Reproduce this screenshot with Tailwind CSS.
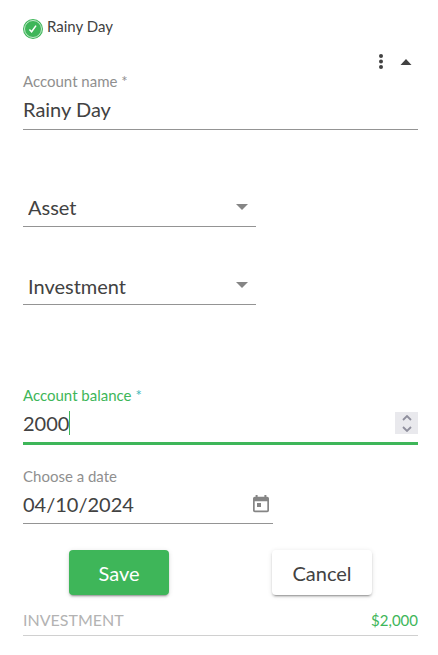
<!DOCTYPE html>
<html lang="en">

<head>
    <meta charset="UTF-8">
    <meta name="viewport" content="width=device-width, initial-scale=1.0">
    <title>Edit Account</title>
    <script src="https://cdn.jsdelivr.net/npm/@tailwindcss/browser@4"></script>
</head>

<body class="bg-white font-['Lato',sans-serif] text-[15px] text-[#424242]">

    <main class="pt-[13px] pl-[23px] pr-5 pb-5">
        <!-- Account header -->
        <header class="flex items-end gap-1">
            <svg class="size-5" viewBox="0 0 20 20" aria-hidden="true">
                <circle cx="10" cy="10" r="10" fill="#3eb659" />
                <circle cx="10" cy="10" r="8.5" fill="none" stroke="#c5e9cd" stroke-width="1" />
                <path d="M6.4 10.4l2.2 2.4 4.4-6.2" fill="none" stroke="#fff" stroke-width="1.5" />
            </svg>
            <h1 class="leading-[26px]">Rainy Day</h1>
        </header>

        <div class="mt-[11px] flex justify-end gap-px">
            <button type="button" aria-label="More options">
                <svg class="size-6" viewBox="0 0 24 24" fill="currentColor">
                    <circle cx="12" cy="6" r="2" />
                    <circle cx="12" cy="11.5" r="2" />
                    <circle cx="12" cy="17" r="2" />
                </svg>
            </button>
            <button type="button" aria-label="Collapse">
                <svg class="size-6" viewBox="0 0 24 24" fill="currentColor">
                    <path d="M6.5 15l5.5-6 5.500 6z" />
                </svg>
            </button>
        </div>

        <form onsubmit="return false">
            <div class="-mt-[2px]">
                <label for="name" class="block h-5 leading-[18px] text-[#8f8f8f]">Account name *</label>
                <input id="name" type="text" value="Rainy Day" class="block h-[38px] w-full border-b border-[#949494] pb-[3px] text-xl outline-none">
            </div>

            <div class="relative mt-[59px] w-[233px]">
                <select aria-label="Account type" class="block h-[38px] w-full appearance-none border-b border-[#949494] pb-px pl-[5px] text-xl outline-none">
                    <option>Asset</option>
                    <option>Liability</option>
                </select>
                <svg class="pointer-events-none absolute top-[15px] right-2 h-[6px] w-3" viewBox="0 0 12 6" fill="#858585">
                    <path d="M0 0h12L6 6z" />
                </svg>
            </div>

            <div class="relative mt-10 w-[233px]">
                <select aria-label="Account category" class="block h-[38px] w-full appearance-none border-b border-[#949494] pl-[5px] text-xl outline-none">
                    <option>Investment</option>
                    <option>Savings</option>
                </select>
                <svg class="pointer-events-none absolute top-[15px] right-2 h-[6px] w-3" viewBox="0 0 12 6" fill="#858585">
                    <path d="M0 0h12L6 6z" />
                </svg>
            </div>

            <div class="mt-[81px]">
                <label for="balance" class="block h-5 leading-[18px] text-[#3eb659]">Account balance <span class="text-[#3fb8ba]">*</span></label>
                <div class="flex h-[39px] items-center border-b-3 border-[#3eb659] pb-[2px]">
                    <input id="balance" type="text" inputmode="numeric" value="2000" class="field-sizing-content text-xl caret-transparent outline-none">
                    <span class="h-6 w-px bg-[#3eb659]"></span>
                    <div class="ml-auto flex h-[22px] w-[23px] flex-col bg-[#e9e9ed] text-[#8f8f9d]">
                        <button type="button" aria-label="Increase" class="flex flex-1 items-center justify-center">
                            <svg class="h-[6px] w-[10px]" viewBox="0 0 10 6" fill="none" stroke="currentColor" stroke-width="1.8">
                                <path d="M1 5l4-4 4 4" />
                            </svg>
                        </button>
                        <button type="button" aria-label="Decrease" class="flex flex-1 items-center justify-center">
                            <svg class="h-[6px] w-[10px]" viewBox="0 0 10 6" fill="none" stroke="currentColor" stroke-width="1.8">
                                <path d="M1 1l4 4 4-4" />
                            </svg>
                        </button>
                    </div>
                </div>
            </div>

            <div class="mt-[21px] w-[250px]">
                <label for="date" class="block h-5 leading-5 text-[#8f8f8f]">Choose a date</label>
                <div class="flex h-[38px] items-center border-b border-[#949494] pb-[2px]">
                    <input id="date" type="text" value="04/10/2024" class="min-w-0 flex-1 text-xl outline-none">
                    <button type="button" aria-label="Open calendar" class="pr-1">
                        <svg class="h-[18px] w-4" viewBox="0 0 16 18" fill="#858585">
                            <path fill-rule="evenodd" d="M2.600 0h2v1.800h6.800V0h2v1.800h.8a1.800 1.800 0 0 1 1.800 1.800v11.800a1.800 1.800 0 0 1-1.800 1.800H1.800A1.800 1.800 0 0 1 0 15.400V3.600a1.800 1.800 0 0 1 1.800-1.800h.8zM1.700 6.300v9.200h12.600V6.300z" />
                            <path d="M4 8h4v4H4z" />
                        </svg>
                    </button>
                </div>
            </div>

            <div class="mt-[26px] flex justify-between px-[46px] text-xl">
                <button type="submit" class="h-[45px] w-[100px] rounded bg-[#3eb659] text-white shadow-[0_3px_1px_-2px_rgba(0,0,0,0.2),0_2px_2px_0_rgba(0,0,0,0.14),0_1px_5px_0_rgba(0,0,0,0.12)]">Save</button>
                <button type="button" class="h-[45px] w-[100px] rounded bg-white shadow-[0_3px_1px_-2px_rgba(0,0,0,0.2),0_2px_2px_0_rgba(0,0,0,0.14),0_1px_5px_0_rgba(0,0,0,0.12)]">Cancel</button>
            </div>
        </form>

        <!-- Account summary -->
        <footer class="mt-[14px] flex justify-between border-b border-[#d0d0d0] pb-1 leading-[22px]">
            <span class="text-base leading-[22px] text-[#b3b3b3]">INVESTMENT</span>
            <span class="text-[#3eb659]">$2,000</span>
        </footer>
    </main>

</body>

</html>
